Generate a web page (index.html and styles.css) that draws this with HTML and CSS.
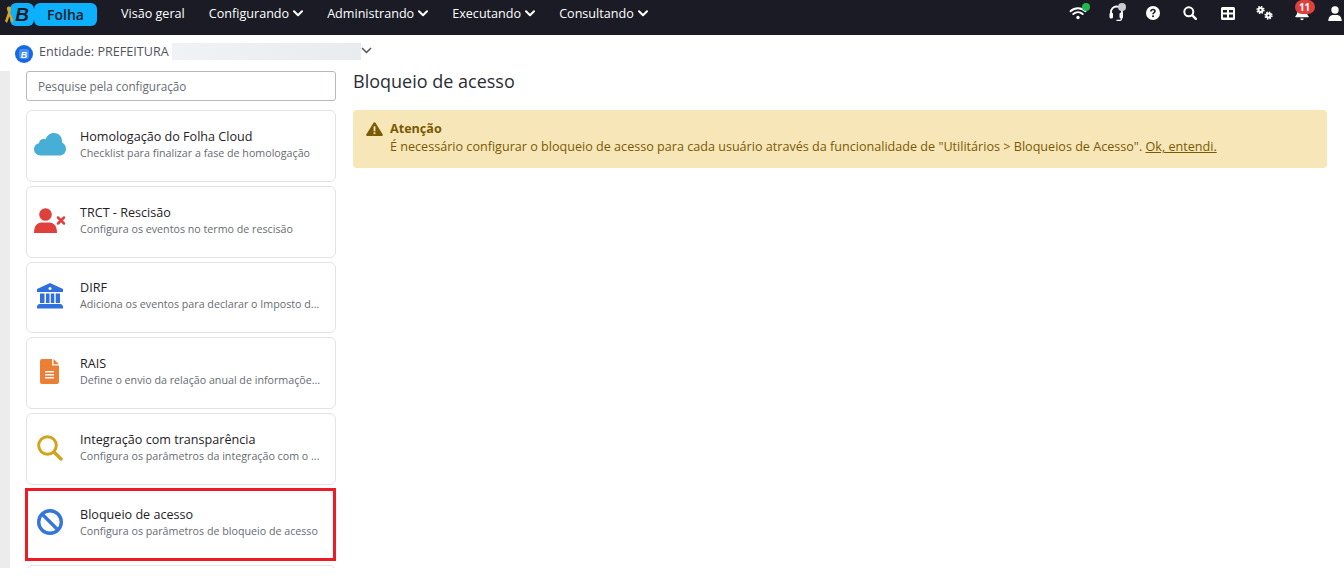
FILE: index.html
```html
<!DOCTYPE html>
<html lang="pt-BR">
<head>
<meta charset="utf-8">
<title>Bloqueio de acesso</title>
<link rel="stylesheet" href="styles.css">
</head>
<body>
<div class="page">
  <header class="topbar">
    <div class="brand">
      <svg class="ribbon" width="10" height="20" viewBox="0 0 10 20"><path d="M5 1.500C3.200 1.500 2.600 3 3 4.600L4 7.500 1 16l2 2 2.400-6.500L8 18l1.500-2.500L6 7.500l1-3C7.400 3 6.800 1.500 5 1.500z" fill="#d9a520"/></svg>
      <span class="brand-b">B</span>
      <span class="brand-name">Folha</span>
    </div>
    <nav class="menu">
      <a class="menu-item">Visão geral</a>
      <a class="menu-item">Configurando<svg class="chev" width="10" height="7" viewBox="0 0 10 7"><path d="M1 1.300l4 4 4-4" fill="none" stroke="#fff" stroke-width="2" stroke-linecap="round" stroke-linejoin="round"/></svg></a>
      <a class="menu-item">Administrando<svg class="chev" width="10" height="7" viewBox="0 0 10 7"><path d="M1 1.300l4 4 4-4" fill="none" stroke="#fff" stroke-width="2" stroke-linecap="round" stroke-linejoin="round"/></svg></a>
      <a class="menu-item">Executando<svg class="chev" width="10" height="7" viewBox="0 0 10 7"><path d="M1 1.300l4 4 4-4" fill="none" stroke="#fff" stroke-width="2" stroke-linecap="round" stroke-linejoin="round"/></svg></a>
      <a class="menu-item">Consultando<svg class="chev" width="10" height="7" viewBox="0 0 10 7"><path d="M1 1.300l4 4 4-4" fill="none" stroke="#fff" stroke-width="2" stroke-linecap="round" stroke-linejoin="round"/></svg></a>
    </nav>
    <div class="tools">
      <span class="tool tool-wifi">
        <svg width="18" height="14" viewBox="0 0 18 14"><path d="M1.500 5.200C5.800 1.300 12.200 1.300 16.500 5.200M4.300 8C7 5.600 11 5.600 13.700 8" fill="none" stroke="#fff" stroke-width="2" stroke-linecap="round"/><circle cx="9" cy="11.500" r="1.700" fill="#fff"/></svg>
        <i class="dot dot-green"></i>
      </span>
      <span class="tool tool-head">
        <svg width="15" height="16" viewBox="0 0 15 16"><path d="M2 9V7a5.500 5.500 0 0 1 11 0v2" fill="none" stroke="#fff" stroke-width="1.800"/><rect x="0.500" y="7.500" width="3.500" height="6" rx="1.500" fill="#fff"/><rect x="10.500" y="7.500" width="3.500" height="6" rx="1.500" fill="#fff"/><path d="M12.500 13v1a1.500 1.500 0 0 1-1.500 1.300H7.500" fill="none" stroke="#fff" stroke-width="1.300"/></svg>
        <i class="dot dot-grey"></i>
      </span>
      <span class="tool">
        <svg width="14" height="14" viewBox="0 0 14 14"><circle cx="7" cy="7" r="7" fill="#fff"/><path d="M5 5.400C5 4.200 6 3.500 7 3.500s2 .7 2 1.800C9 6.700 7 6.600 7 8.200" fill="none" stroke="#1a1b25" stroke-width="1.600"/><rect x="6.100" y="9.400" width="1.800" height="1.700" fill="#1a1b25"/></svg>
      </span>
      <span class="tool">
        <svg width="14" height="14" viewBox="0 0 14 14"><circle cx="5.800" cy="5.800" r="4.500" fill="none" stroke="#fff" stroke-width="2"/><path d="M9.200 9.200l3.600 3.600" stroke="#fff" stroke-width="2.400" stroke-linecap="round"/></svg>
      </span>
      <span class="tool">
        <svg width="14" height="13" viewBox="0 0 14 13"><path fill-rule="evenodd" d="M1.500 0h11A1.500 1.500 0 0 1 14 1.500v10a1.500 1.500 0 0 1-1.500 1.500h-11A1.500 1.500 0 0 1 0 11.500v-10A1.500 1.500 0 0 1 1.500 0zM2 3v2.500h4V3zm6 0v2.500h4V3zM2 7.500V10.500h4v-3zm6 0v3h4v-3z" fill="#fff"/></svg>
      </span>
      <span class="tool">
        <svg width="17" height="14" viewBox="0 0 17 14"><circle cx="4.500" cy="4" r="2" fill="none" stroke="#fff" stroke-width="2"/><circle cx="4.500" cy="4" r="3.400" fill="none" stroke="#fff" stroke-width="1.500" stroke-dasharray="1.500 1.170"/><circle cx="12.500" cy="9.500" r="2" fill="none" stroke="#fff" stroke-width="2"/><circle cx="12.500" cy="9.500" r="3.400" fill="none" stroke="#fff" stroke-width="1.500" stroke-dasharray="1.500 1.170"/></svg>
      </span>
      <span class="tool tool-bell">
        <svg width="14" height="16" viewBox="0 0 14 16"><path d="M7 1a4.500 4.500 0 0 0-4.500 4.500c0 3.500-1.500 5-2.300 6 0 .5.300.8.800.8h12c.5 0 .8-.3.800-.8-.8-1-2.300-2.500-2.300-6A4.500 4.500 0 0 0 7 1z" fill="#fff"/><path d="M5.300 13.500a1.700 1.700 0 0 0 3.400 0z" fill="#fff"/></svg>
        <b class="badge">11</b>
      </span>
      <span class="tool tool-user">
        <svg width="14" height="15" viewBox="0 0 14 15"><circle cx="7" cy="4" r="3.700" fill="#fff"/><path d="M0.300 15c0-4 2.400-6 4.700-6h4c2.300 0 4.700 2 4.700 6z" fill="#fff"/></svg>
      </span>
    </div>
  </header>

  <div class="entity">
    <svg class="entity-logo" width="18" height="18" viewBox="0 0 18 18"><circle cx="9" cy="9" r="9" fill="#1668e3"/><rect x="4" y="4" width="10" height="10" rx="2.500" fill="#4a8ff0"/><text x="9" y="12.500" text-anchor="middle" class="entity-b">B</text></svg>
    <span class="entity-label">Entidade: PREFEITURA</span>
    <span class="entity-mask"></span>
    <svg class="entity-chev" width="11" height="7" viewBox="0 0 11 7"><path d="M1 1l4.500 4.500L10 1" fill="none" stroke="#50545b" stroke-width="1.500"/></svg>
  </div>

  <div class="body">
    <div class="rail"></div>
    <aside class="side">
      <div class="search">Pesquise pela configuração</div>
      <div class="cards">
        <div class="card">
          <div class="card-icon"><svg width="32" height="23" viewBox="0 0 32 23"><path d="M7 22.500C3 22.500 0 19.700 0 16.300c0-3 2.200-5.400 5-6C5 8 7 6 9.500 6c.7 0 1.300.1 1.900.4C13 2.600 16 0 19.700 0 24.500 0 28 3.500 28 8c0 .6 0 1.100-.1 1.600 2.400 1 4.100 3.500 4.100 6.300 0 3.700-3 6.600-6.800 6.600z" fill="#47afd5"/></svg></div>
          <div class="card-text"><div class="card-title">Homologação do Folha Cloud</div><div class="card-desc">Checklist para finalizar a fase de homologação</div></div>
        </div>
        <div class="card">
          <div class="card-icon"><svg width="32" height="25" viewBox="0 0 32 25"><circle cx="11.500" cy="6.500" r="6.300" fill="#e0403c"/><path d="M0 25c0-7 3-10.500 7.500-10.500h8C20 14.500 23 18 23 25z" fill="#e0403c"/><path d="M24 9.500l6 6M30 9.500l-6 6" stroke="#e0403c" stroke-width="2.500" stroke-linecap="round"/></svg></div>
          <div class="card-text"><div class="card-title">TRCT - Rescisão</div><div class="card-desc">Configura os eventos no termo de rescisão</div></div>
        </div>
        <div class="card">
          <div class="card-icon"><svg width="26" height="26" viewBox="0 0 26 26"><path d="M13 0L26 6v3H0V6z" fill="#2f6fde"/><circle cx="13" cy="5.500" r="1.500" fill="#fff"/><path d="M3 10.500h4.500v9.500H3zM9 10.500h3.500v9.500H9zM13.800 10.500h3.500v9.500h-3.500zM18.700 10.500h4.300v9.500h-4.300z" fill="#2f6fde"/><path d="M2 21h22l2 2v2.500H0V23z" fill="#2f6fde"/></svg></div>
          <div class="card-text"><div class="card-title">DIRF</div><div class="card-desc">Adiciona os eventos para declarar o Imposto d...</div></div>
        </div>
        <div class="card">
          <div class="card-icon"><svg width="19" height="25" viewBox="0 0 19 25"><path d="M2 0h10v6.500h7V23a2 2 0 0 1-2 2H2a2 2 0 0 1-2-2V2a2 2 0 0 1 2-2z" fill="#ec7f33"/><path d="M13.500 0L19 5.200h-5.500z" fill="#ec7f33"/><path d="M5 12.800h9M5 15.800h9M5 18.800h9" stroke="#fff" stroke-width="1.500"/></svg></div>
          <div class="card-text"><div class="card-title">RAIS</div><div class="card-desc">Define o envio da relação anual de informaçõe...</div></div>
        </div>
        <div class="card">
          <div class="card-icon"><svg width="26" height="26" viewBox="0 0 26 26"><circle cx="10.500" cy="10.500" r="8.800" fill="none" stroke="#d2a31c" stroke-width="3"/><path d="M17 17l7 7" stroke="#d2a31c" stroke-width="3.400" stroke-linecap="round"/></svg></div>
          <div class="card-text"><div class="card-title">Integração com transparência</div><div class="card-desc">Configura os parâmetros da integração com o ...</div></div>
        </div>
        <div class="card card-active">
          <div class="card-icon"><svg width="26" height="26" viewBox="0 0 26 26"><circle cx="13" cy="13" r="11.300" fill="none" stroke="#3476dc" stroke-width="3.400"/><path d="M5 5l16 16" stroke="#3476dc" stroke-width="3.400"/></svg></div>
          <div class="card-text"><div class="card-title">Bloqueio de acesso</div><div class="card-desc">Configura os parâmetros de bloqueio de acesso</div></div>
        </div>
        <div class="card"></div>
      </div>
    </aside>
    <main class="main">
      <h1 class="title">Bloqueio de acesso</h1>
      <div class="alert">
        <svg class="alert-icon" width="17" height="14" viewBox="0 0 17 14"><path d="M8.500 0.300c.5 0 .9.300 1.100.7l7 11.300c.5.800-.1 1.700-1 1.700H1.400c-.9 0-1.500-.9-1-1.700L7.400 1c.2-.4.600-.7 1.100-.7z" fill="#7a5a04"/><rect x="7.600" y="4.300" width="1.800" height="5" fill="#f7e6b8"/><rect x="7.600" y="10.300" width="1.800" height="1.800" fill="#f7e6b8"/></svg>
        <div class="alert-text">
          <div class="alert-title">Atenção</div>
          <div>É necessário configurar o bloqueio de acesso para cada usuário através da funcionalidade de "Utilitários &gt; Bloqueios de Acesso". <a class="alert-link">Ok, entendi.</a></div>
        </div>
      </div>
    </main>
  </div>
</div>
</body>
</html>
```
FILE: styles.css
```css
* { box-sizing: border-box; }
html, body { margin: 0; padding: 0; height: 584px; overflow: hidden; background: #fff; }
body { font-family: "Open Sans", "Liberation Sans", sans-serif; font-size: 13px; color: #1f2229; }

.page { height: 568px; overflow: hidden; display: flex; flex-direction: column; }

.topbar { flex: none; height: 35px; background: #1a1b25; color: #fff; display: flex; align-items: center; }

.brand { display: flex; align-items: center; margin-left: 4px; height: 23px; width: 93px; margin-top: -6px; }
.ribbon { flex: none; position: relative; z-index: 1; }
.brand-b { margin-left: -4px; width: 24px; height: 23px; background: #0cb0fd; border-radius: 6px; color: #1a1b25; font: italic 700 19px/23px "Liberation Sans", sans-serif; text-align: center; }
.brand-name { width: 63px; height: 23px; background: #0cb0fd; border-radius: 6px; color: #1a1b25; font-size: 14px; font-weight: 600; line-height: 23px; text-align: center; }

.menu { display: flex; margin-left: 24px; margin-top: -8px; gap: 24px; }
.menu-item { color: #fff; font-size: 12.600px; line-height: 18px; display: flex; align-items: center; white-space: nowrap; }
.chev { margin-left: 4px; }

.tools { margin-left: auto; display: flex; align-items: center; height: 28px; margin-top: -9px; }
.tool { position: relative; display: flex; align-items: center; justify-content: center; width: 37.400px; height: 16px; }
.dot { position: absolute; width: 8px; height: 8px; border-radius: 50%; top: -2px; right: 7px; }
.dot-green { background: #22b84f; }
.dot-grey { background: #c7ccd3; right: 8px; }
.tool-head { padding-left: 3px; }
.badge { position: absolute; top: -5px; left: 11px; width: 20px; height: 14px; background: #e0403c; color: #fff; border-radius: 7px; font-size: 10px; line-height: 14px; text-align: center; font-weight: 700; }
.tool-user { width: 23px; justify-content: flex-end; padding-right: 2px; }

.entity { flex: none; height: 36px; display: flex; align-items: center; padding-left: 15px; color: #50545b; font-size: 12.600px; }
.entity-logo { flex: none; margin-top: 1px; }
.entity-b { font: italic 700 9px "Liberation Sans", sans-serif; fill: #fff; }
.entity-label { margin-left: 6px; margin-top: -3px; }
.entity-mask { width: 189px; height: 17px; margin-left: 3px; margin-top: -4px; background: linear-gradient(90deg, #f0f3f5, #e8ecee); }
.entity-chev { margin-left: 0; margin-top: -5px; }

.body { flex: 1; min-height: 0; display: flex; }
.rail { flex: none; width: 10px; background: #ececec; }

.side { flex: none; width: 310px; margin-left: 16px; }
.search { height: 30px; border: 1px solid #b6b9be; border-radius: 3px; padding-left: 11px; color: #686c73; font-size: 11.700px; line-height: 29px; }
.cards { margin-top: 9px; display: flex; flex-direction: column; gap: 4px; }
.card { flex: none; height: 71.800px; border: 1px solid #e1e3e6; border-radius: 6px; display: flex; align-items: center; background: #fff; padding-bottom: 3px; }
.card-active { border: 3px solid #ed1c24; border-radius: 0; margin-left: -1px; margin-top: -0.500px; height: 72.300px; width: 311px; padding-bottom: 5px; }
.card-active .card-icon { margin-left: -1px; }
.card-icon { flex: none; width: 53px; display: flex; justify-content: center; padding-left: 1px; padding-right: 9px; }
.card-text { flex: 1; min-width: 0; }
.card-title { font-size: 12.600px; line-height: 17px; color: #1f2229; white-space: nowrap; }
.card-desc { font-size: 10.700px; line-height: 16px; color: #686c73; white-space: nowrap; }

.main { flex: 1; min-width: 0; margin-left: 17px; padding-right: 17px; }
.title { margin: 0; font-size: 18px; font-weight: 400; line-height: 20px; color: #2a2d35; }
.alert { margin-top: 19px; height: 58px; background: #f7e6b8; border-radius: 4px; display: flex; padding: 10px 13px; color: #7a5a04; font-size: 12.600px; line-height: 17px; }
.alert-icon { flex: none; margin-top: 2px; }
.alert-text { margin-left: 7px; }
.alert-title { font-weight: 700; margin-bottom: 1px; }
.alert-link { text-decoration: underline; }
```
